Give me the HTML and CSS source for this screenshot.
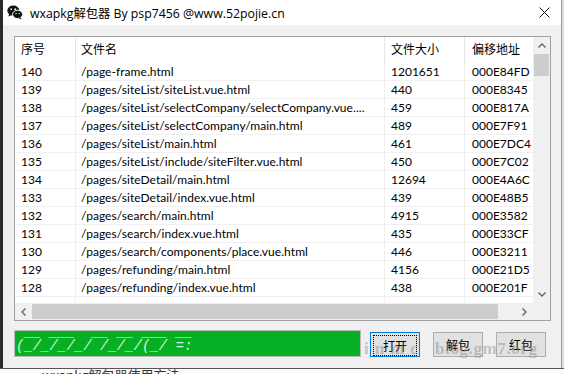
FILE: index.html
```html
<!DOCTYPE html>
<html lang="zh-CN">
<head>
    <meta charset="UTF-8">
    <title>wxapkg解包器</title>
    <link rel="stylesheet" href="styles.css">
</head>
<body>
    <div class="screen">
        <div class="strip"></div>
        <div class="window">
            <div class="titlebar">
                <svg class="app-icon" width="16" height="15" viewBox="0 0 16 15">
                    <ellipse cx="6.3" cy="5.6" rx="6" ry="5.1" fill="#111"/>
                    <path d="M2.2 8.6 L1.4 11.4 L4.6 9.9 Z" fill="#111"/>
                    <ellipse cx="10.6" cy="9.4" rx="5" ry="4.2" fill="#111" stroke="#fff" stroke-width="1"/>
                    <path d="M13.4 12.2 L14.6 14.4 L11.8 13.2 Z" fill="#111"/>
                    <circle cx="4.2" cy="4.2" r="0.9" fill="#fff"/>
                    <circle cx="8.3" cy="4.2" r="0.9" fill="#fff"/>
                    <circle cx="9" cy="8.6" r="0.7" fill="#fff"/>
                    <circle cx="12.2" cy="8.6" r="0.7" fill="#fff"/>
                </svg>
                <span class="title">wxapkg解包器 By psp7456 @www.52pojie.cn</span>
                <svg class="close" width="11" height="11" viewBox="0 0 11 11">
                    <path d="M0.5 0.5 L10.5 10.5 M10.5 0.5 L0.5 10.5" stroke="#111" stroke-width="1"/>
                </svg>
            </div>
            <div class="client">
                <div class="listview">
                    <div class="lv-body">
                        <div class="lv-head">
                            <div class="c1">序号</div>
                            <div class="c2">文件名</div>
                            <div class="c3">文件大小</div>
                            <div class="c4">偏移地址</div>
                        </div>
                        <div id="rows"></div>
                    </div>
                    <div class="vscroll">
                        <div class="arrow">
                            <svg width="8" height="5" viewBox="0 0 8 5"><path d="M0.5 4.5 L4 1 L7.5 4.5" fill="none" stroke="#606060" stroke-width="1.3"/></svg>
                        </div>
                        <div class="vtrack"><div class="vthumb"></div></div>
                        <div class="arrow">
                            <svg width="8" height="5" viewBox="0 0 8 5"><path d="M0.5 0.5 L4 4 L7.5 0.5" fill="none" stroke="#606060" stroke-width="1.3"/></svg>
                        </div>
                    </div>
                    <div class="hscroll">
                        <div class="arrow">
                            <svg width="5" height="8" viewBox="0 0 5 8"><path d="M4.5 0.5 L1 4 L4.5 7.5" fill="none" stroke="#606060" stroke-width="1.3"/></svg>
                        </div>
                        <div class="htrack"><div class="hthumb"></div></div>
                        <div class="arrow">
                            <svg width="5" height="8" viewBox="0 0 5 8"><path d="M0.5 0.5 L4 4 L0.5 7.5" fill="none" stroke="#606060" stroke-width="1.3"/></svg>
                        </div>
                    </div>
                    <div class="corner"></div>
                </div>
                <div class="bottom">
                    <div class="progress">
                        <pre class="ascii"> __ ___  __ __ ___ __
(_/_/_/_/ /_/_/(_/ =:</pre>
                    </div>
                    <button class="btn focused"><span>打开</span></button>
                    <button class="btn">解包</button>
                    <button class="btn">红包</button>
                    <div class="watermark"><span class="wm1">inmc</span><span>blog.gm7.org</span></div>
                </div>
            </div>
        </div>
    </div>
    <div class="below"><span>wxapkg解包器使用方法</span></div>

    <script>
        const files = [
            [140, "/page-frame.html", 1201651, "000E84FD"],
            [139, "/pages/siteList/siteList.vue.html", 440, "000E8345"],
            [138, "/pages/siteList/selectCompany/selectCompany.vue....", 459, "000E817A"],
            [137, "/pages/siteList/selectCompany/main.html", 489, "000E7F91"],
            [136, "/pages/siteList/main.html", 461, "000E7DC4"],
            [135, "/pages/siteList/include/siteFilter.vue.html", 450, "000E7C02"],
            [134, "/pages/siteDetail/main.html", 12694, "000E4A6C"],
            [133, "/pages/siteDetail/index.vue.html", 439, "000E48B5"],
            [132, "/pages/search/main.html", 4915, "000E3582"],
            [131, "/pages/search/index.vue.html", 435, "000E33CF"],
            [130, "/pages/search/components/place.vue.html", 446, "000E3211"],
            [129, "/pages/refunding/main.html", 4156, "000E21D5"],
            [128, "/pages/refunding/index.vue.html", 438, "000E201F"],
            [127, "/pages/refunding/include/refundInfo.html", 452, "000E1E5B"]
        ];

        const rows = document.getElementById('rows');
        files.forEach(f => {
            const row = document.createElement('div');
            row.className = 'lv-row';
            row.innerHTML = `
                <div class="c1">${f[0]}</div>
                <div class="c2">${f[1]}</div>
                <div class="c3">${f[2]}</div>
                <div class="c4">${f[3]}</div>
            `;
            rows.appendChild(row);
        });
    </script>
</body>
</html>
```

FILE: styles.css
```css
body {
    margin: 0;
    width: 564px;
    height: 374px;
    overflow: hidden;
    background-color: #dedede;
    font-family: Lato, "Noto Sans CJK SC", sans-serif;
    font-size: 12px;
    color: #000;
}
.screen {
    display: flex;
    height: 368px;
}
.strip {
    width: 3px;
    background-color: #2b2b2b;
}
.window {
    width: 558px;
    background-color: #f0f0f0;
    border-right: 1px solid #9c9c9c;
    display: flex;
    flex-direction: column;
}
.titlebar {
    height: 25px;
    background-color: #fff;
    display: flex;
    align-items: center;
    padding-left: 4px;
}
.app-icon {
    margin-right: 7px;
    margin-top: -1px;
}
.title {
    flex: 1;
    font-family: "Open Sans", "Noto Sans CJK SC", sans-serif;
    font-size: 12.3px;
    white-space: nowrap;
}
.close {
    margin-right: 11px;
}
.client {
    padding: 11px 10px 0 11px;
    flex: 1;
}
.listview {
    height: 283px;
    border: 1px solid #a0a0a0;
    background-color: #fff;
    display: grid;
    grid-template-columns: 1fr 17px;
    grid-template-rows: 1fr 17px;
}
.lv-body {
    overflow: hidden;
    white-space: nowrap;
}
.lv-head, .lv-row {
    display: flex;
}
.lv-head {
    height: 26px;
    line-height: 26px;
}
.lv-head div {
    border-right: 1px solid #e5e5e5;
    height: 26px;
}
.lv-row {
    height: 18px;
    line-height: 17px;
}
.lv-row div {
    border-right: 1px solid #f0f0f0;
    border-bottom: 1px solid #f0f0f0;
}
.lv-row:last-child {
    line-height: 21px;
}
.c1, .c2, .c3, .c4 {
    padding-left: 6px;
    box-sizing: border-box;
    overflow: hidden;
    flex: none;
}
.c1 { width: 61px; }
.c2 { width: 309px; padding-left: 5px; letter-spacing: 0.05px; }
.c3 { width: 80px; }
.c4 { width: 90px; padding-left: 7px; }
.vscroll {
    background-color: #f0f0f0;
    display: flex;
    flex-direction: column;
}
.hscroll {
    background-color: #f0f0f0;
    display: flex;
}
.corner {
    background-color: #f0f0f0;
}
.arrow {
    width: 17px;
    height: 17px;
    display: flex;
    align-items: center;
    justify-content: center;
    flex: none;
}
.vtrack {
    flex: 1;
    padding: 0 1px;
}
.vthumb {
    height: 22px;
    background-color: #cdcdcd;
}
.htrack {
    flex: 1;
    padding: 1px 0;
}
.hthumb {
    width: 466px;
    height: 15px;
    background-color: #cdcdcd;
}
.bottom {
    position: relative;
    display: flex;
    align-items: flex-start;
    margin-top: 9px;
}
.progress {
    position: relative;
    width: 345px;
    height: 25px;
    border: 1px solid #bcbcbc;
    background-color: #06b025;
}
.ascii {
    position: absolute;
    left: 1px;
    top: -6px;
    margin: 0;
    font-family: "Liberation Mono", monospace;
    font-size: 14px;
    font-style: italic;
    line-height: 14px;
    color: rgba(255, 255, 255, 0.85);
}
.btn {
    width: 50px;
    height: 25px;
    margin-top: 2px;
    margin-left: 13px;
    padding: 0;
    border: 1px solid #adadad;
    background-color: #e1e1e1;
    font-family: "Noto Sans CJK SC", sans-serif;
    font-size: 12px;
    color: #000;
}
.btn.focused {
    margin-left: 9px;
    border-color: #0078d7;
    padding: 2px;
}
.btn.focused span {
    display: block;
    height: 19px;
    line-height: 19px;
    border: 1px dotted #000;
}
.watermark {
    position: absolute;
    left: 350px;
    top: 9px;
    display: flex;
    font-family: "Liberation Serif", serif;
    font-weight: bold;
    font-size: 17px;
    letter-spacing: 0.6px;
    color: rgba(120, 120, 120, 0.4);
    white-space: nowrap;
}
.wm1 {
    width: 71px;
    letter-spacing: 6px;
}
.below {
    height: 6px;
    box-sizing: border-box;
    border-top: 1px solid #555;
    background-color: #fbfbfb;
    overflow: hidden;
    padding-left: 42px;
}
.below span {
    display: block;
    font-family: "Noto Sans CJK SC", sans-serif;
    font-size: 13px;
    line-height: 13px;
    color: #333;
    margin-top: -1px;
}
```
